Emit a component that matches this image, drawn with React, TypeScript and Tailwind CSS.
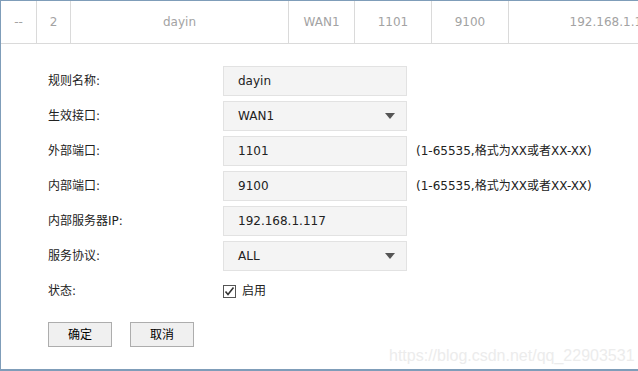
const latin = "font-['DejaVu_Sans','Noto_Sans_CJK_SC',sans-serif]";

const Arrow = () => (
  <svg width="10" height="6" viewBox="0 0 10 6" className="shrink-0">
    <polygon points="0,0 10,0 5,6" fill="#555" />
  </svg>
);

const Field = ({ value, select }: { value: string; select?: boolean }) => (
  <div className="w-[184px] h-[30px] flex items-center justify-between pl-[14px] pr-[11px] bg-[#f4f4f4] border border-[#e2e2e2] text-[#222]">
    <span>{value}</span>
    {select && <Arrow />}
  </div>
);

const rows = [
  { label: "规则名称:", value: "dayin" },
  { label: "生效接口:", value: "WAN1", select: true },
  { label: "外部端口:", value: "1101", hint: "(1-65535,格式为XX或者XX-XX)" },
  { label: "内部端口:", value: "9100", hint: "(1-65535,格式为XX或者XX-XX)" },
  { label: "内部服务器IP:", value: "192.168.1.117" },
  { label: "服务协议:", value: "ALL", select: true },
];

const cells = [
  { text: "--", w: "w-[36px]" },
  { text: "2", w: "w-[34px]" },
  { text: "dayin", w: "w-[218px]" },
  { text: "WAN1", w: "w-[66px]" },
  { text: "1101", w: "w-[77px]" },
  { text: "9100", w: "w-[77px]" },
  { text: "192.168.1.117", w: "w-[210px]" },
];

export default function App() {
  return (
    <div className={`relative w-[638px] h-[371px] overflow-hidden bg-white border-l border-t border-b-2 border-[#7f9db9] text-[12px] ${latin}`}>
      <div className="flex h-[43px] border-b border-[#dadada] text-[#a3a3a3]">
        {cells.map((c, i) => (
          <div key={i} className={`${c.w} shrink-0 flex items-center justify-center border-r border-[#dadada] whitespace-nowrap`}>
            {c.text}
          </div>
        ))}
      </div>

      <div className="pl-[47px] pt-[22px] flex flex-col gap-[5px] text-[#222]">
        {rows.map((r) => (
          <div key={r.label} className="flex items-center h-[30px]">
            <div className="w-[175px] shrink-0">{r.label}</div>
            <Field value={r.value} select={r.select} />
            {r.hint && <div className="ml-[9px]">{r.hint}</div>}
          </div>
        ))}
        <div className="flex items-center h-[30px]">
          <div className="w-[175px] shrink-0">状态:</div>
          <div className="flex items-center gap-[6px]">
            <svg width="13" height="13" viewBox="0 0 13 13">
              <rect x="0.5" y="0.5" width="12" height="12" fill="#fff" stroke="#555" />
              <path d="M2.5 6.5 L5 9.5 L10.5 2.5" fill="none" stroke="#333" strokeWidth="1.6" />
            </svg>
            <span>启用</span>
          </div>
        </div>
        <div className="flex gap-[18px] mt-[11px]">
          <button className="w-[64px] h-[25px] bg-[#f0f0f0] border border-[#adadad] text-black">确定</button>
          <button className="w-[64px] h-[25px] bg-[#f0f0f0] border border-[#adadad] text-black">取消</button>
        </div>
      </div>

      <div className="absolute left-[388px] top-[343px] text-[16px] text-[#ececec] font-['Liberation_Sans',sans-serif]">
        https://blog.csdn.net/qq_22903531
      </div>
    </div>
  );
}
